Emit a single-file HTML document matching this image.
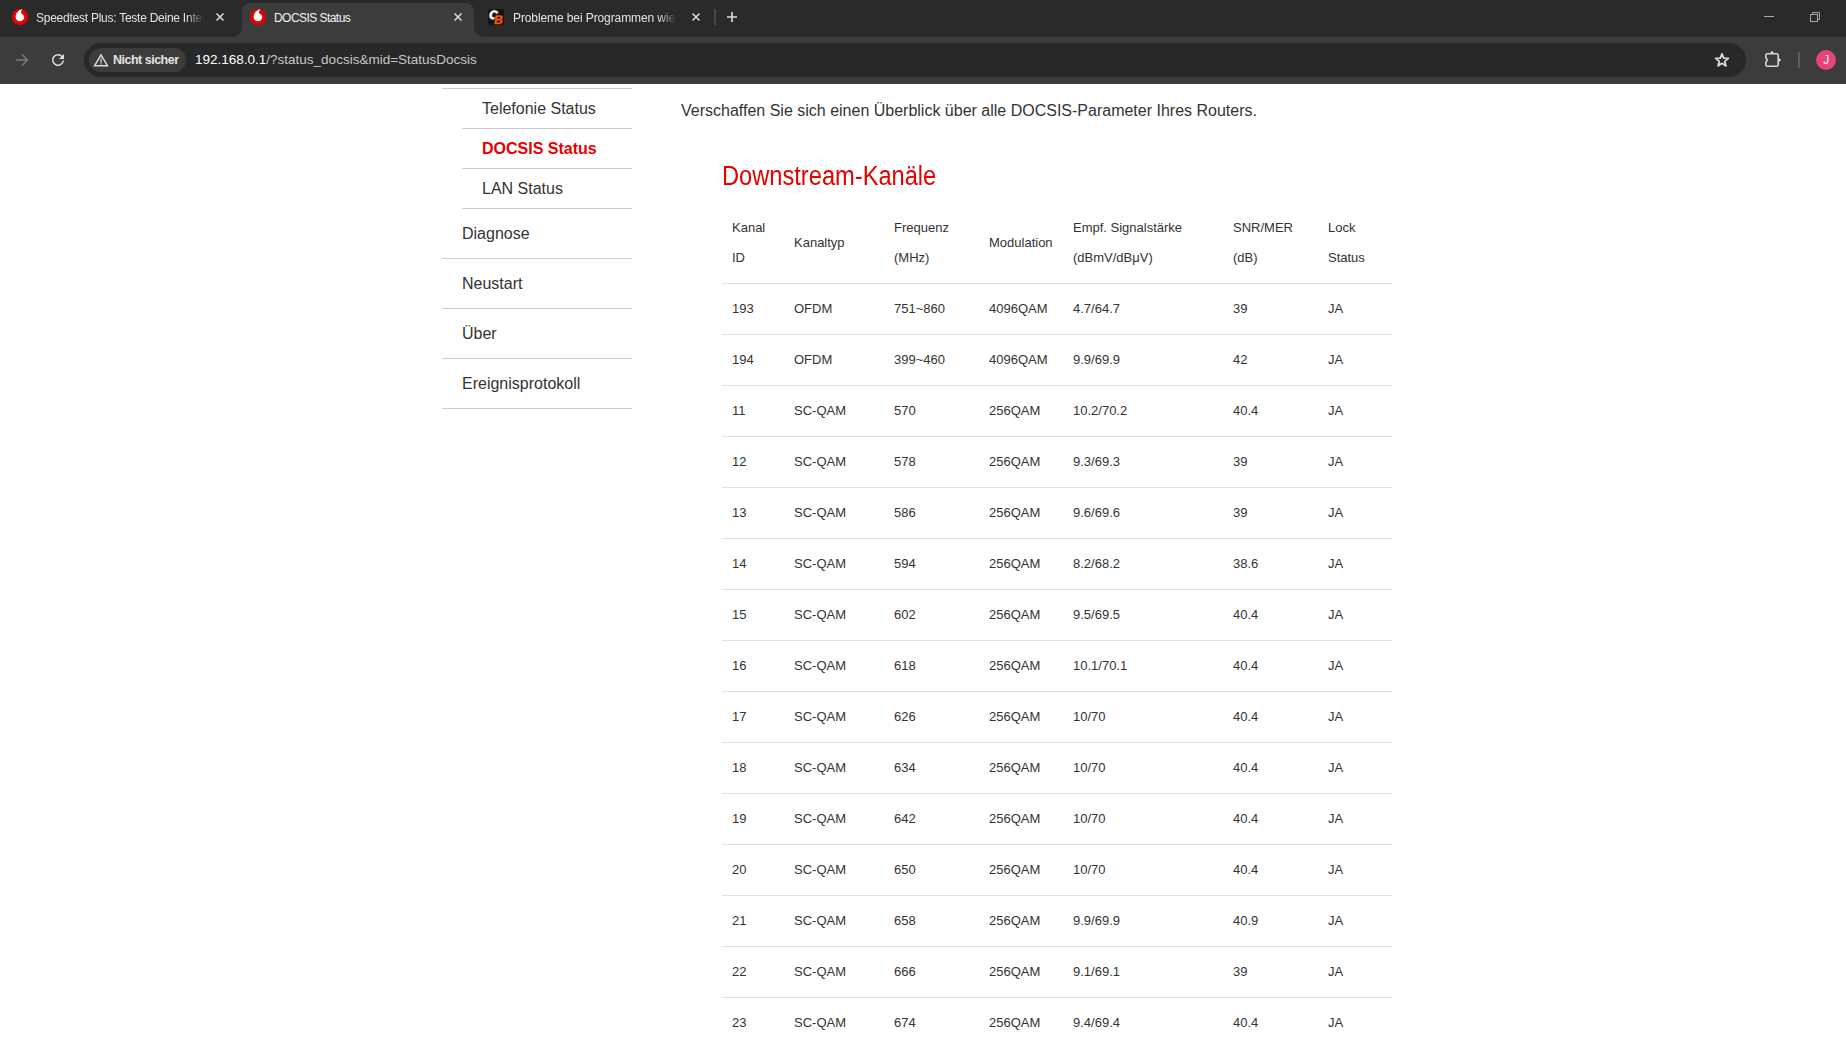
<!DOCTYPE html>
<html>
<head>
<meta charset="utf-8">
<style>
html,body{margin:0;padding:0;}
body{width:1846px;height:1044px;overflow:hidden;position:relative;background:#fff;font-family:"Liberation Sans",sans-serif;}
.abs{position:absolute;}
#tabstrip{left:0;top:0;width:1846px;height:37px;background:#2a2a2a;}
#toolbar{left:0;top:37px;width:1846px;height:47px;background:#3c3c3c;}
.tabtitle{position:absolute;top:11px;height:16px;font-size:12px;line-height:15px;color:#e3e3e3;white-space:nowrap;overflow:hidden;}
.fade{-webkit-mask-image:linear-gradient(to right,#000 calc(100% - 18px),transparent 100%);}
#omni{left:84px;top:43px;width:1662px;height:34px;border-radius:17px;background:#282828;}
#chip{left:89px;top:48px;width:97px;height:24px;border-radius:12px;background:#3c3c3c;}
#chiptext{left:113px;top:52px;font-size:12.5px;line-height:16px;font-weight:bold;color:#e3e3e3;white-space:nowrap;letter-spacing:-0.5px;}
#url{left:195px;top:52px;font-size:13.5px;line-height:16px;color:#c7c7c7;white-space:nowrap;}
#url b{font-weight:normal;color:#fff;}
.line{position:absolute;height:1px;background:#cccccc;}
.menu{position:absolute;font-size:16px;line-height:18px;color:#333;white-space:nowrap;}
#intro{left:681px;top:102px;font-size:16px;line-height:18px;color:#333;white-space:nowrap;}
#heading{left:722px;top:161px;font-size:27px;line-height:30px;color:#e60000;white-space:nowrap;transform:scaleX(0.876);transform-origin:0 0;}
#tbl{position:absolute;left:722px;top:202px;border-collapse:collapse;font-size:13px;color:#333;table-layout:fixed;width:670px;}
#tbl td,#tbl th{padding:0 0 0 10px;text-align:left;font-weight:normal;white-space:nowrap;}
#tbl th{height:81px;line-height:30px;vertical-align:middle;border-bottom:1px solid #e0e0e0;}
#tbl tr.r td{height:48px;padding-bottom:2px;line-height:15px;border-bottom:1px solid #e0e0e0;vertical-align:middle;}
</style>
</head>
<body>
<div id="tabstrip" class="abs"></div>
<div id="toolbar" class="abs"></div>
<div class="abs" style="left:0;top:83px;width:1846px;height:1px;background:#434544"></div>
<svg class="abs" style="left:0;top:0" width="1846" height="84">
  <path d="M232 37 A10 10 0 0 0 242 27 V11 A8 8 0 0 1 250 3 H466 A8 8 0 0 1 474 11 V27 A10 10 0 0 0 484 37 Z" fill="#3c3c3c"/>
  <!-- favicon 1 -->
  <g transform="translate(12,9)">
    <circle cx="8" cy="8" r="8" fill="#e60000"/>
    <path d="M10.6 0.2 C7 0.6 3.6 3.8 3.6 8 A4.3 4.3 0 0 0 12.2 8 C12.2 5.5 9.6 4.9 8.9 3.7 C9 2.4 9.7 1.1 10.6 0.2 Z" fill="#fff"/>
  </g>
  <g transform="translate(250,9)">
    <circle cx="8" cy="8" r="8" fill="#e60000"/>
    <path d="M10.6 0.2 C7 0.6 3.6 3.8 3.6 8 A4.3 4.3 0 0 0 12.2 8 C12.2 5.5 9.6 4.9 8.9 3.7 C9 2.4 9.7 1.1 10.6 0.2 Z" fill="#fff"/>
  </g>
  <!-- CB favicon -->
  <g transform="translate(488,9)">
    <rect x="0" y="0" width="16" height="16" rx="2" fill="#151515"/>
    <g transform="skewX(-8)">
    <text x="2.2" y="10.1" font-family="Liberation Sans" font-weight="bold" font-size="12" fill="#fff" stroke="#fff" stroke-width="0.7">C</text>
    <text x="7.8" y="15.5" font-family="Liberation Sans" font-weight="bold" font-size="12.5" fill="#111" stroke="#111" stroke-width="1.2">B</text>
    <text x="7.8" y="15.5" font-family="Liberation Sans" font-weight="bold" font-size="12.5" fill="#ff5512" stroke="#ff5512" stroke-width="0.25">B</text>
    </g>
  </g>
  <!-- close X -->
  <g stroke="#dcdcdc" stroke-width="1.5" stroke-linecap="butt">
    <path d="M216.5 13.5 L223.5 20.5 M223.5 13.5 L216.5 20.5"/>
    <path d="M454.5 13.5 L461.5 20.5 M461.5 13.5 L454.5 20.5"/>
    <path d="M692.5 13.5 L699.5 20.5 M699.5 13.5 L692.5 20.5"/>
  </g>
  <rect x="714" y="9" width="2" height="16" fill="#474747"/>
  <path d="M732 12 V22 M727 17 H737" stroke="#dcdcdc" stroke-width="1.6"/>
  <!-- window controls -->
  <rect x="1764" y="16" width="10" height="1" fill="#a8a8a8"/>
  <g fill="none" stroke="#a8a8a8" stroke-width="1">
    <rect x="1810.5" y="14.5" width="7" height="7"/>
    <path d="M1812.5 14.5 V12.5 H1819.5 V19.5 H1817.5"/>
  </g>
  <path d="M64 53.9 V58.9 H59 Z" fill="#dcdcdc"/>
  <!-- forward arrow -->
  <g fill="none" stroke="#7b7b7b" stroke-width="1.5">
    <path d="M16 60 H27.5 M22 54.5 L27.5 60 L22 65.5"/>
  </g>
  <!-- reload -->
  <g fill="none" stroke="#dcdcdc" stroke-width="1.5">
    <path d="M62.06 56.59 A5.3 5.3 0 1 0 63.28 60.46"/>
  </g>
</svg>
<div id="omni" class="abs"></div>
<div id="chip" class="abs"></div>
<svg class="abs" style="left:0;top:0" width="1846" height="84">
  <!-- warning -->
  <g fill="none" stroke="#dcdcdc" stroke-width="1.4" stroke-linejoin="miter">
    <path d="M101 54.8 L107.5 65.8 H94.5 Z"/>
  </g>
  <rect x="100.4" y="58.5" width="1.3" height="4" fill="#dcdcdc"/>
  <rect x="100.4" y="63.2" width="1.3" height="1.3" fill="#dcdcdc"/>
  <!-- star -->
  <path d="M1722.00 53.75 L1723.69 58.12 L1728.37 58.38 L1724.74 61.34 L1725.94 65.87 L1722.00 63.33 L1718.06 65.87 L1719.26 61.34 L1715.63 58.38 L1720.31 58.12 Z" fill="none" stroke="#d8d8d8" stroke-width="1.8" stroke-linejoin="round"/>
  <!-- puzzle -->
  <path d="M1767.3 53.8 H1776.7 A1.5 1.5 0 0 1 1778.2 55.3 V64.7 A1.5 1.5 0 0 1 1776.7 66.2 H1767.3 A1.5 1.5 0 0 1 1765.8 64.7 V62.3 Q1768.4 60 1765.8 57.7 V55.3 A1.5 1.5 0 0 1 1767.3 53.8 Z" fill="none" stroke="#d8d8d8" stroke-width="1.6" stroke-linejoin="round"/><path d="M1769.8 54 Q1771 50.9 1772 50.9 Q1773 50.9 1774.2 54 Z M1778 57.8 Q1781.1 59 1781.1 60 Q1781.1 61 1778 62.2 Z" fill="#d8d8d8"/>
  <rect x="1798" y="52" width="2" height="16" fill="#5e5e5e"/>
  <circle cx="1826" cy="60" r="10" fill="#e8437b"/>
  <text x="1826.3" y="64.2" text-anchor="middle" font-family="Liberation Sans" font-size="12" fill="#fff">J</text>
</svg>
<div class="tabtitle fade" style="left:36px;width:168px;color:#e3e3e3;letter-spacing:-0.25px">Speedtest Plus: Teste Deine Internetgeschwindigkeit</div>
<div class="tabtitle" style="left:274px;width:170px;color:#f2f2f2;letter-spacing:-0.55px">DOCSIS Status</div>
<div class="tabtitle fade" style="left:513px;width:164px;color:#e3e3e3;letter-spacing:-0.1px">Probleme bei Programmen wie Speedtest</div>
<div id="chiptext" class="abs">Nicht sicher</div>
<div id="url" class="abs"><b>192.168.0.1</b>/?status_docsis&amp;mid=StatusDocsis</div>

<!-- page -->
<div class="line" style="left:442px;top:88px;width:190px"></div>
<div class="menu" style="left:482px;top:99.5px">Telefonie Status</div>
<div class="line" style="left:462px;top:128px;width:170px"></div>
<div class="menu" style="left:482px;top:139.5px;color:#e60000;font-weight:bold">DOCSIS Status</div>
<div class="line" style="left:462px;top:168px;width:170px"></div>
<div class="menu" style="left:482px;top:179.5px">LAN Status</div>
<div class="line" style="left:462px;top:208px;width:170px"></div>
<div class="menu" style="left:462px;top:225px">Diagnose</div>
<div class="line" style="left:442px;top:258px;width:190px"></div>
<div class="menu" style="left:462px;top:275px">Neustart</div>
<div class="line" style="left:442px;top:308px;width:190px"></div>
<div class="menu" style="left:462px;top:325px">Über</div>
<div class="line" style="left:442px;top:358px;width:190px"></div>
<div class="menu" style="left:462px;top:375px">Ereignisprotokoll</div>
<div class="line" style="left:442px;top:408px;width:190px"></div>

<div id="intro" class="abs">Verschaffen Sie sich einen Überblick über alle DOCSIS-Parameter Ihres Routers.</div>
<div id="heading" class="abs">Downstream-Kanäle</div>
<table id="tbl">
<colgroup><col style="width:62px"><col style="width:100px"><col style="width:95px"><col style="width:84px"><col style="width:160px"><col style="width:95px"><col style="width:74px"></colgroup>
<tr><th>Kanal<br>ID</th><th>Kanaltyp</th><th>Frequenz<br>(MHz)</th><th>Modulation</th><th>Empf. Signalstärke<br>(dBmV/dBμV)</th><th>SNR/MER<br>(dB)</th><th>Lock<br>Status</th></tr>
<tr class="r"><td>193</td><td>OFDM</td><td>751~860</td><td>4096QAM</td><td>4.7/64.7</td><td>39</td><td>JA</td></tr>
<tr class="r"><td>194</td><td>OFDM</td><td>399~460</td><td>4096QAM</td><td>9.9/69.9</td><td>42</td><td>JA</td></tr>
<tr class="r"><td>11</td><td>SC-QAM</td><td>570</td><td>256QAM</td><td>10.2/70.2</td><td>40.4</td><td>JA</td></tr>
<tr class="r"><td>12</td><td>SC-QAM</td><td>578</td><td>256QAM</td><td>9.3/69.3</td><td>39</td><td>JA</td></tr>
<tr class="r"><td>13</td><td>SC-QAM</td><td>586</td><td>256QAM</td><td>9.6/69.6</td><td>39</td><td>JA</td></tr>
<tr class="r"><td>14</td><td>SC-QAM</td><td>594</td><td>256QAM</td><td>8.2/68.2</td><td>38.6</td><td>JA</td></tr>
<tr class="r"><td>15</td><td>SC-QAM</td><td>602</td><td>256QAM</td><td>9.5/69.5</td><td>40.4</td><td>JA</td></tr>
<tr class="r"><td>16</td><td>SC-QAM</td><td>618</td><td>256QAM</td><td>10.1/70.1</td><td>40.4</td><td>JA</td></tr>
<tr class="r"><td>17</td><td>SC-QAM</td><td>626</td><td>256QAM</td><td>10/70</td><td>40.4</td><td>JA</td></tr>
<tr class="r"><td>18</td><td>SC-QAM</td><td>634</td><td>256QAM</td><td>10/70</td><td>40.4</td><td>JA</td></tr>
<tr class="r"><td>19</td><td>SC-QAM</td><td>642</td><td>256QAM</td><td>10/70</td><td>40.4</td><td>JA</td></tr>
<tr class="r"><td>20</td><td>SC-QAM</td><td>650</td><td>256QAM</td><td>10/70</td><td>40.4</td><td>JA</td></tr>
<tr class="r"><td>21</td><td>SC-QAM</td><td>658</td><td>256QAM</td><td>9.9/69.9</td><td>40.9</td><td>JA</td></tr>
<tr class="r"><td>22</td><td>SC-QAM</td><td>666</td><td>256QAM</td><td>9.1/69.1</td><td>39</td><td>JA</td></tr>
<tr class="r"><td>23</td><td>SC-QAM</td><td>674</td><td>256QAM</td><td>9.4/69.4</td><td>40.4</td><td>JA</td></tr>
<tr class="r"><td>24</td><td>SC-QAM</td><td>682</td><td>256QAM</td><td>9.4/69.4</td><td>40.4</td><td>JA</td></tr>
</table>
</body>
</html>
